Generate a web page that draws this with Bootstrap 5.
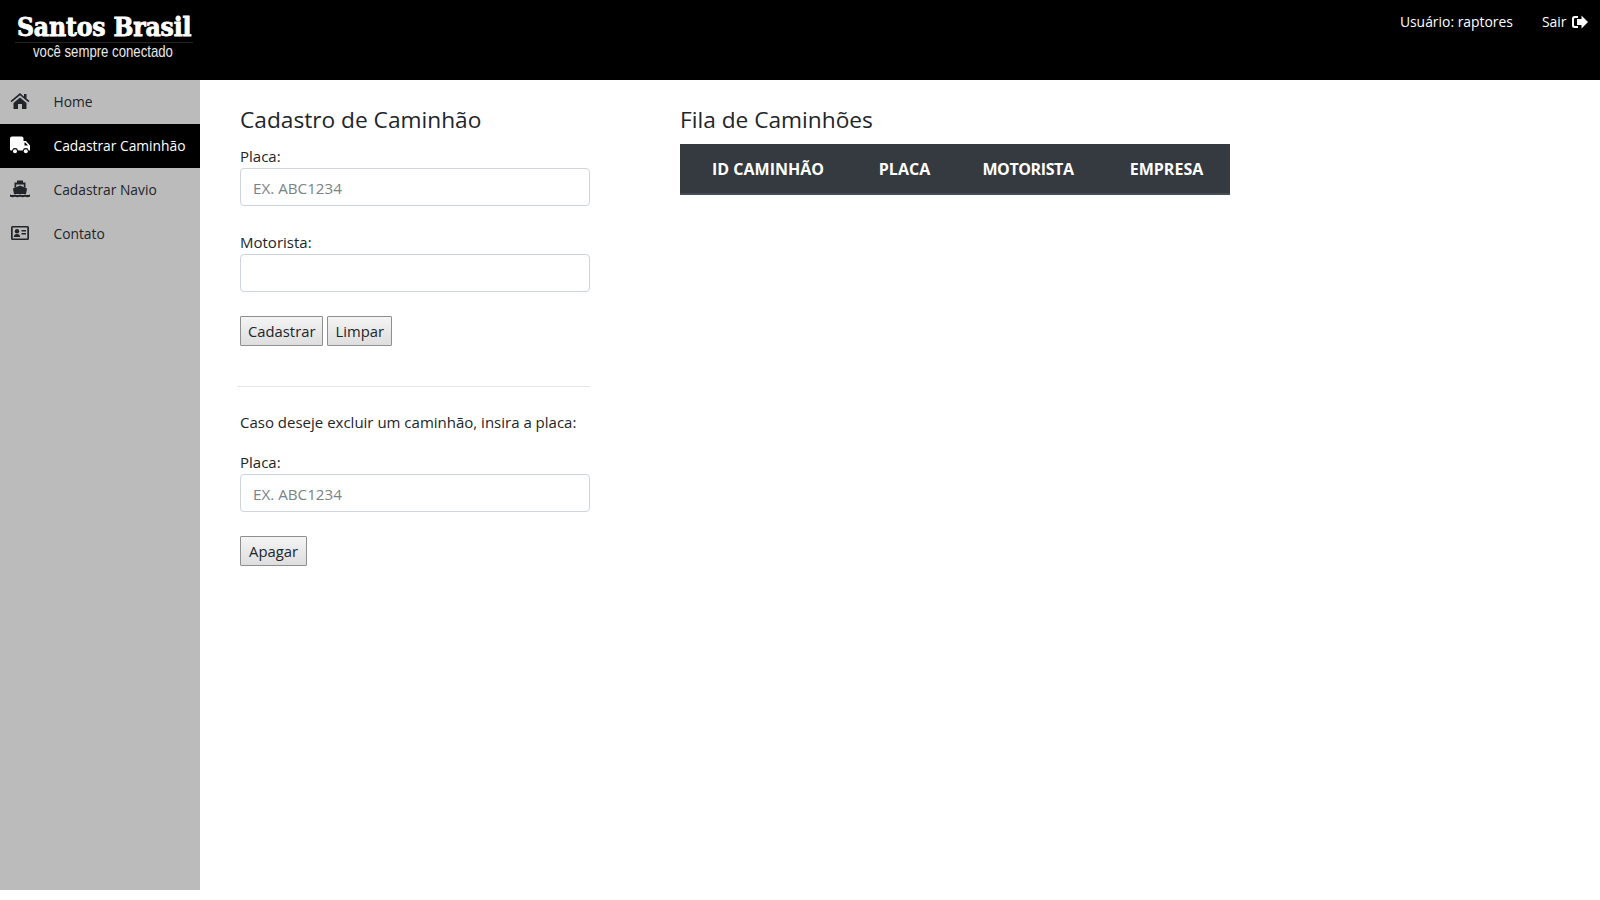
<!DOCTYPE html>
<html lang="pt-BR">
<head>
<meta charset="utf-8">
<title>Cadastro de Caminhão</title>
<link href="https://cdn.jsdelivr.net/npm/bootstrap@5.3.0/dist/css/bootstrap.min.css" rel="stylesheet">
<style>
html,body{height:100%;}
body{font-family:"Open Sans","Noto Sans",sans-serif;font-size:15px;color:#212529;background:#fff;overflow:hidden;}
.top-bar{height:80px;background:#000;color:#fff;}
.logo-box{width:200px;padding:13px 0 0 15px;}
.logo-main{font-family:"DejaVu Serif Condensed","DejaVu Serif",serif;font-weight:700;font-size:26.200px;line-height:28px;height:29px;color:#fff;white-space:nowrap;letter-spacing:-.15px;-webkit-text-stroke:.8px #fff;padding-left:2px;}
.logo-sub{font-size:17px;line-height:18px;font-family:"Liberation Sans",sans-serif;padding-left:18px;white-space:nowrap;border-top:1px solid #222;width:178px;color:#e8e8e8;}
.logo-sub span{display:inline-block;transform:scaleX(.775);transform-origin:left center;}
.top-link{font-size:13.900px;color:#fff;text-decoration:none;}
.top-links{padding-top:12px;padding-right:12px;gap:29px;}
.sair-link{gap:5.500px;}
.page-row{height:810px;}
.side-bar{width:200px;background:#bbb;flex:none;}
.side-link{height:44px;color:#212529;font-size:13.800px;text-decoration:none;padding:0 0 0 10px;}
.side-link svg{width:20px;height:18px;margin:0 23.500px 2px 0;flex:none;fill:currentColor;}
.side-link.on{background:#000;color:#fff;}
.form-col{width:350px;margin-left:40px;padding-top:25px;}
.list-col{margin-left:90px;padding-top:25px;width:550px;}
.sec-title{font-size:22.700px;font-weight:400;line-height:30px;margin:0 0 9px;}
.fld-label{display:block;line-height:24px;margin:0;height:24px;}
.fld-input{height:38px;border-radius:4px;border:1px solid #ced4da;font-size:15.200px;padding:7px 12px 5px;}
.fld-input::placeholder{color:#7b838a;}
.plain-btn{height:30px;padding:0 7px;font-size:14.800px;border:1px solid #8f8f8f;border-radius:1px;background:linear-gradient(#f4f4f4,#dedede);color:#212529;}
.wide-btn{min-width:67px;padding-top:1px;}
.rule-line{margin:40px 0 24px -3px;border-top:1px solid #e6e6e6;opacity:1;}
.queue-head{margin:0;width:550px;height:51px;background:#343a40;color:#fff;table-layout:fixed;border-collapse:collapse;}
.queue-head th{font-size:16px;font-weight:700;text-transform:uppercase;border-bottom:2px solid #454d55;padding:0;vertical-align:middle;text-align:center;white-space:nowrap;}
.queue-head th.tight{letter-spacing:-.4px;}
.col-a{width:176px;}
.col-b{width:97px;}
.col-c{width:150px;}
.col-d{width:127px;}
</style>
</head>
<body>
<header class="top-bar d-flex justify-content-between">
  <div class="logo-box">
    <div class="logo-main">Santos Brasil</div>
    <div class="logo-sub"><span>você sempre conectado</span></div>
  </div>
  <div class="top-links d-flex align-items-start">
    <a class="top-link" href="#">Usuário: raptores</a>
    <a class="top-link sair-link d-flex align-items-center" href="#">Sair
      <svg width="16" height="14" viewBox="0 0 16 14" fill="#fff"><path d="M6 1H2.500A2.500 2.500 0 0 0 0 3.500v7A2.500 2.500 0 0 0 2.500 13H6v-2H3a1 1 0 0 1-1-1V4a1 1 0 0 1 1-1h3z"/><path d="M9.500 0.500 16 7l-6.500 6.500V10H5V4h4.500z"/></svg>
    </a>
  </div>
</header>
<div class="page-row d-flex">
  <nav class="side-bar d-flex flex-column">
    <a class="side-link d-flex align-items-center" href="#">
      <svg viewBox="0 0 20 18"><path d="M10 1 0.500 9l1 1.300L10 3.200l8.500 7.100 1-1.300-3-2.500V2H14v2.800zM3.500 11V17h4.500v-5h4v5h4.500V11L10 5.500z"/></svg>Home</a>
    <a class="side-link on d-flex align-items-center" href="#">
      <svg viewBox="0 0 20 18"><path d="M0 2.500A2 2 0 0 1 2 .500h9.500a2 2 0 0 1 2 2V5h2.500l4 4.500V14.500h-1.300a3 3 0 0 0-5.900 0H8a3 3 0 0 0-5.900 0H1a1 1 0 0 1-1-1zM14.500 6.500V9.500h3.500l-2.700-3z"/><circle cx="5" cy="15.200" r="2"/><circle cx="15.800" cy="15.200" r="2"/></svg>Cadastrar Caminhão</a>
    <a class="side-link d-flex align-items-center" href="#">
      <svg viewBox="0 0 20 18"><path d="M7 .500h6V2.500h2.500V8l-1.700-.7V4.500H6.200v2.800L4.500 8V2.500H7z"/><path d="M10 5.500 17 8.500 16 14H4L3 8.500z"/><path d="M0 14.500c2 .8 3.500.8 5 0 1.500.8 3.500.8 5 0 1.500.8 3.500.8 5 0 1.500.8 3 .8 5 0v2.200c-2 .6-3.500.6-5 0-1.500.6-3.500.6-5 0-1.500.6-3.500.6-5 0-1.500.6-3 .6-5 0z"/></svg>Cadastrar Navio</a>
    <a class="side-link d-flex align-items-center" href="#">
      <svg viewBox="0 0 20 18"><path d="M2.500 2h15A1.500 1.500 0 0 1 19 3.500v11a1.500 1.500 0 0 1-1.500 1.500h-15A1.500 1.500 0 0 1 1 14.500v-11A1.500 1.500 0 0 1 2.500 2zm.200 1.600v10.800h14.600V3.600z"/><circle cx="7" cy="7.200" r="2.200"/><path d="M3.800 13c0-2 1.300-3 3.200-3s3.200 1 3.200 3zM11.500 6h4.500v1.500h-4.500zM11.500 9h4.500v1.500h-4.500z"/></svg>Contato</a>
  </nav>
  <main class="form-col">
    <h2 class="sec-title">Cadastro de Caminhão</h2>
    <label class="fld-label" for="p1">Placa:</label>
    <input id="p1" class="form-control fld-input" placeholder="EX. ABC1234">
    <label class="fld-label mt-4" for="m1">Motorista:</label>
    <input id="m1" class="form-control fld-input">
    <div class="d-flex gap-1 mt-4">
      <button class="plain-btn" type="button">Cadastrar</button>
      <button class="plain-btn" type="button">Limpar</button>
    </div>
    <hr class="rule-line">
    <p class="mb-3 lh-base">Caso deseje excluir um caminhão, insira a placa:</p>
    <label class="fld-label" for="p2">Placa:</label>
    <input id="p2" class="form-control fld-input" placeholder="EX. ABC1234">
    <div class="mt-4"><button class="plain-btn wide-btn" type="button">Apagar</button></div>
  </main>
  <section class="list-col">
    <h2 class="sec-title">Fila de Caminhões</h2>
    <table class="queue-head">
      <colgroup><col class="col-a"><col class="col-b"><col class="col-c"><col class="col-d"></colgroup>
      <thead><tr><th>Id Caminhão</th><th>Placa</th><th class="tight">Motorista</th><th>Empresa</th></tr></thead>
    </table>
  </section>
</div>
</body>
</html>
